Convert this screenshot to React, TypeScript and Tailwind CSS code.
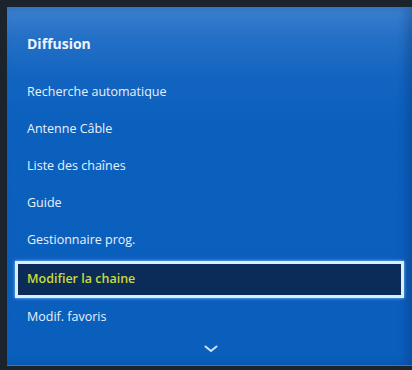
import React from "react";

const items = [
  "Recherche automatique",
  "Antenne Câble",
  "Liste des chaînes",
  "Guide",
  "Gestionnaire prog.",
  "Modifier la chaine",
  "Modif. favoris",
];

export default function App() {
  return (
    <div className="w-[412px] h-[370px] bg-[#1b232d] pt-[7px] pl-[7px] overflow-hidden" style={{ fontFamily: '"Open Sans", "Noto Sans", sans-serif' }}>
      <div className="w-[405px] h-[359px] flex flex-col bg-[linear-gradient(180deg,#3b80cf_0px,#2470c6_30px,#1264c0_70px,#0b60bd_120px,#0a5fbd_100%)] border-b border-[#3a78b8] shadow-[inset_-6px_0_8px_rgba(0,30,80,0.25)]">
        <div className="h-[67px] flex items-center pl-[20px] pt-[5px] text-[14px] font-bold text-[#eef4fb]">
          Diffusion
        </div>
        {items.map((t, i) =>
          i === 5 ? (
            <div key={t} className="h-[37px] flex items-center px-[8px] pt-[4px]">
              <div className="w-[391px] h-[37px] border-[3px] border-[#d8eefc] bg-[#0b2b58] flex items-center pl-[9px] text-[12.5px] font-semibold text-[#c9dc3a] shadow-[0_0_3px_rgba(180,220,255,0.8)]">
                {t}
              </div>
            </div>
          ) : (
            <div key={t} className={`h-[37px] flex items-center pl-[20px] text-[12.5px] font-medium text-[#eaf1fa] ${i === 6 ? "pt-[6px]" : ""}`}>
              {t}
            </div>
          )
        )}
        <div className="flex justify-center pt-[12px] pl-[2px]">
          <svg width="14" height="8" viewBox="0 0 14 8">
            <path d="M1.5 1.5 L7 6 L12.5 1.5" fill="none" stroke="#cfe3f7" strokeWidth="2" strokeLinecap="round" strokeLinejoin="round" />
          </svg>
        </div>
      </div>
    </div>
  );
}
